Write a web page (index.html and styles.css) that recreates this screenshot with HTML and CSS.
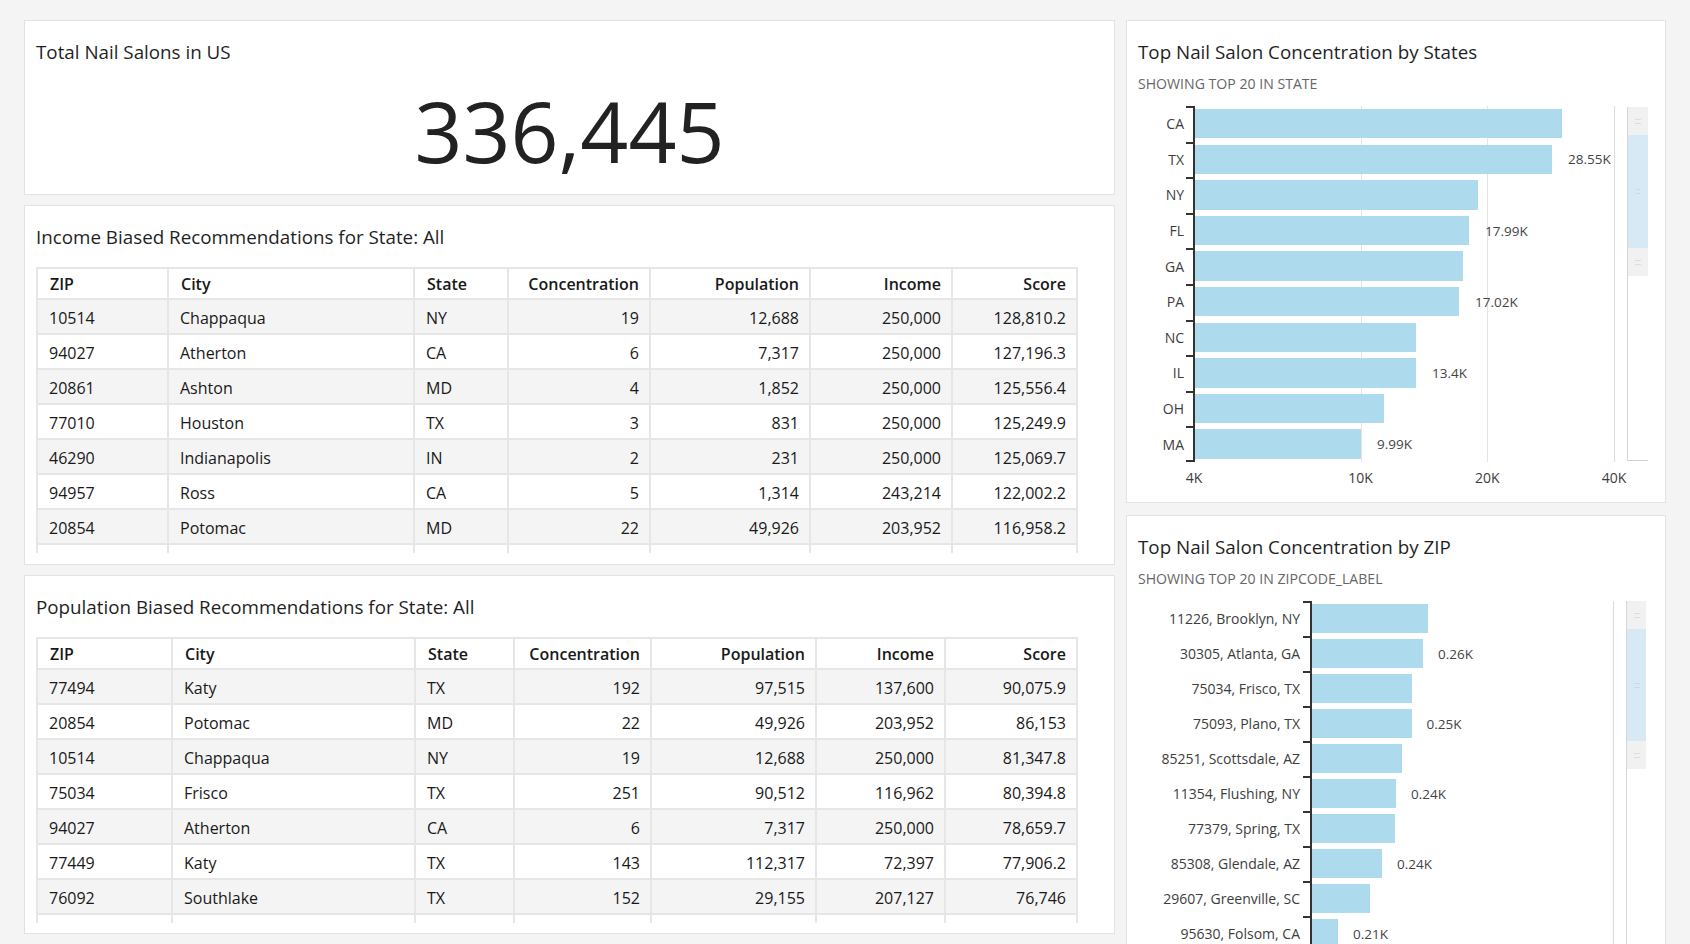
FILE: index.html
```html
<!DOCTYPE html>
<html lang="en">
<head>
<meta charset="utf-8">
<title>Nail Salons Dashboard</title>
<link rel="stylesheet" href="styles.css">
</head>
<body>
<div class="dashboard">
  <div class="col left">
    <section class="card kpi">
      <h2 class="title">Total Nail Salons in US</h2>
      <div class="kpi-value">336,445</div>
    </section>

    <section class="card tablecard">
      <h2 class="title">Income Biased Recommendations for State: All</h2>
      <div class="table-clip">
        <table class="dtable t1">
          <thead>
            <tr><th class="w1">ZIP</th><th class="w2">City</th><th class="w3">State</th><th class="w4 num">Concentration</th><th class="w5 num">Population</th><th class="w6 num">Income</th><th class="w7 num">Score</th></tr>
          </thead>
          <tbody>
            <tr><td>10514</td><td>Chappaqua</td><td>NY</td><td class="num">19</td><td class="num">12,688</td><td class="num">250,000</td><td class="num">128,810.2</td></tr>
            <tr><td>94027</td><td>Atherton</td><td>CA</td><td class="num">6</td><td class="num">7,317</td><td class="num">250,000</td><td class="num">127,196.3</td></tr>
            <tr><td>20861</td><td>Ashton</td><td>MD</td><td class="num">4</td><td class="num">1,852</td><td class="num">250,000</td><td class="num">125,556.4</td></tr>
            <tr><td>77010</td><td>Houston</td><td>TX</td><td class="num">3</td><td class="num">831</td><td class="num">250,000</td><td class="num">125,249.9</td></tr>
            <tr><td>46290</td><td>Indianapolis</td><td>IN</td><td class="num">2</td><td class="num">231</td><td class="num">250,000</td><td class="num">125,069.7</td></tr>
            <tr><td>94957</td><td>Ross</td><td>CA</td><td class="num">5</td><td class="num">1,314</td><td class="num">243,214</td><td class="num">122,002.2</td></tr>
            <tr><td>20854</td><td>Potomac</td><td>MD</td><td class="num">22</td><td class="num">49,926</td><td class="num">203,952</td><td class="num">116,958.2</td></tr>
            <tr><td></td><td></td><td></td><td></td><td></td><td></td><td></td></tr>
          </tbody>
        </table>
      </div>
    </section>

    <section class="card tablecard">
      <h2 class="title">Population Biased Recommendations for State: All</h2>
      <div class="table-clip">
        <table class="dtable t2">
          <thead>
            <tr><th class="w1">ZIP</th><th class="w2">City</th><th class="w3">State</th><th class="w4 num">Concentration</th><th class="w5 num">Population</th><th class="w6 num">Income</th><th class="w7 num">Score</th></tr>
          </thead>
          <tbody>
            <tr><td>77494</td><td>Katy</td><td>TX</td><td class="num">192</td><td class="num">97,515</td><td class="num">137,600</td><td class="num">90,075.9</td></tr>
            <tr><td>20854</td><td>Potomac</td><td>MD</td><td class="num">22</td><td class="num">49,926</td><td class="num">203,952</td><td class="num">86,153</td></tr>
            <tr><td>10514</td><td>Chappaqua</td><td>NY</td><td class="num">19</td><td class="num">12,688</td><td class="num">250,000</td><td class="num">81,347.8</td></tr>
            <tr><td>75034</td><td>Frisco</td><td>TX</td><td class="num">251</td><td class="num">90,512</td><td class="num">116,962</td><td class="num">80,394.8</td></tr>
            <tr><td>94027</td><td>Atherton</td><td>CA</td><td class="num">6</td><td class="num">7,317</td><td class="num">250,000</td><td class="num">78,659.7</td></tr>
            <tr><td>77449</td><td>Katy</td><td>TX</td><td class="num">143</td><td class="num">112,317</td><td class="num">72,397</td><td class="num">77,906.2</td></tr>
            <tr><td>76092</td><td>Southlake</td><td>TX</td><td class="num">152</td><td class="num">29,155</td><td class="num">207,127</td><td class="num">76,746</td></tr>
            <tr><td></td><td></td><td></td><td></td><td></td><td></td><td></td></tr>
          </tbody>
        </table>
      </div>
    </section>
  </div>

  <div class="col right">
    <section class="card chartcard states">
      <h2 class="title">Top Nail Salon Concentration by States</h2>
      <div class="subtitle">SHOWING TOP 20 IN STATE</div>
      <div class="chart">
        <div class="chart-main">
          <div class="chart-body">
            <div class="ylabels">
              <div class="yl">CA</div>
              <div class="yl">TX</div>
              <div class="yl">NY</div>
              <div class="yl">FL</div>
              <div class="yl">GA</div>
              <div class="yl">PA</div>
              <div class="yl">NC</div>
              <div class="yl">IL</div>
              <div class="yl">OH</div>
              <div class="yl">MA</div>
            </div>
            <div class="plot">
              <div class="band"><div class="bar" style="width:367px"></div></div>
              <div class="band"><div class="bar" style="width:357px"></div><span class="val">28.55K</span></div>
              <div class="band"><div class="bar" style="width:283px"></div></div>
              <div class="band"><div class="bar" style="width:274px"></div><span class="val">17.99K</span></div>
              <div class="band"><div class="bar" style="width:268px"></div></div>
              <div class="band"><div class="bar" style="width:264px"></div><span class="val">17.02K</span></div>
              <div class="band"><div class="bar" style="width:221px"></div></div>
              <div class="band"><div class="bar" style="width:221px"></div><span class="val">13.4K</span></div>
              <div class="band"><div class="bar" style="width:189px"></div></div>
              <div class="band"><div class="bar" style="width:166px"></div><span class="val">9.99K</span></div>
            </div>
          </div>
          <div class="xaxis">
            <span class="xl">4K</span><span class="xl">10K</span><span class="xl">20K</span><span class="xl">40K</span>
          </div>
        </div>
        <div class="scroller">
          <div class="handle"></div>
          <div class="thumb"></div>
          <div class="handle"></div>
          <div class="rest"></div>
        </div>
      </div>
    </section>

    <section class="card chartcard zips">
      <h2 class="title">Top Nail Salon Concentration by ZIP</h2>
      <div class="subtitle">SHOWING TOP 20 IN ZIPCODE_LABEL</div>
      <div class="chart">
        <div class="chart-main">
          <div class="chart-body">
            <div class="ylabels">
              <div class="yl">11226, Brooklyn, NY</div>
              <div class="yl">30305, Atlanta, GA</div>
              <div class="yl">75034, Frisco, TX</div>
              <div class="yl">75093, Plano, TX</div>
              <div class="yl">85251, Scottsdale, AZ</div>
              <div class="yl">11354, Flushing, NY</div>
              <div class="yl">77379, Spring, TX</div>
              <div class="yl">85308, Glendale, AZ</div>
              <div class="yl">29607, Greenville, SC</div>
              <div class="yl">95630, Folsom, CA</div>
            </div>
            <div class="plot">
              <div class="band"><div class="bar" style="width:116px"></div></div>
              <div class="band"><div class="bar" style="width:111px"></div><span class="val">0.26K</span></div>
              <div class="band"><div class="bar" style="width:99.5px"></div></div>
              <div class="band"><div class="bar" style="width:99.5px"></div><span class="val">0.25K</span></div>
              <div class="band"><div class="bar" style="width:90px"></div></div>
              <div class="band"><div class="bar" style="width:84px"></div><span class="val">0.24K</span></div>
              <div class="band"><div class="bar" style="width:82.5px"></div></div>
              <div class="band"><div class="bar" style="width:70px"></div><span class="val">0.24K</span></div>
              <div class="band"><div class="bar" style="width:58px"></div></div>
              <div class="band"><div class="bar" style="width:26px"></div><span class="val">0.21K</span></div>
            </div>
          </div>
        </div>
        <div class="scroller">
          <div class="handle"></div>
          <div class="thumb"></div>
          <div class="handle"></div>
          <div class="rest"></div>
        </div>
      </div>
    </section>
  </div>
</div>
</body>
</html>
```

FILE: styles.css
```css
* {
  box-sizing: border-box;
  margin: 0;
  padding: 0;
}

html, body {
  height: 100%;
}

body {
  background: #f4f4f4;
  font-family: "Open Sans", "Noto Sans", sans-serif;
  color: #222;
  overflow: hidden;
}

.dashboard {
  display: grid;
  grid-template-columns: 1091px 540px;
  column-gap: 11px;
  padding: 20px 24px 0;
  align-items: start;
}

.col {
  display: flex;
  flex-direction: column;
  gap: 10px;
}

.col.right {
  gap: 12px;
}

.card {
  background: #fff;
  border: 1px solid #e3e3e3;
  padding: 19px 11px 0;
  overflow: hidden;
}

.title {
  font-size: 18.8px;
  font-weight: 400;
  line-height: 24px;
  color: #1f1f1f;
  white-space: nowrap;
}

/* KPI */
.kpi {
  height: 175px;
}

.kpi-value {
  font-size: 84px;
  line-height: 84px;
  text-align: center;
  margin-top: 25px;
  color: #222;
}

/* Tables */
.tablecard {
  height: 360px;
}

.tablecard + .tablecard {
  height: 359px;
}

.table-clip {
  margin-top: 18px;
  height: 286px;
  width: 1042px;
  overflow: hidden;
}

.dtable {
  border-collapse: separate;
  border-spacing: 0;
  table-layout: fixed;
  width: 1042px;
  border-left: 2px solid #e6e6e6;
  border-top: 2px solid #e6e6e6;
  font-size: 16px;
  color: #191919;
}

.dtable th,
.dtable td {
  border-right: 2px solid #e6e6e6;
  border-bottom: 2px solid #e6e6e6;
  padding: 0 10px 0 11px;
  white-space: nowrap;
  text-align: left;
  overflow: hidden;
  line-height: 20px;
  vertical-align: middle;
}

.dtable th {
  height: 31px;
  font-weight: 600;
  padding-left: 12px;
}

.dtable td {
  height: 35px;
  padding-top: 2px;
}

.dtable .num {
  text-align: right;
}

.dtable tbody tr:nth-child(odd) {
  background: #f4f4f4;
}

.t1 .w1 { width: 131px; }
.t1 .w2 { width: 246px; }
.t1 .w3 { width: 94px; }
.t1 .w4 { width: 142px; }
.t1 .w5 { width: 160px; }
.t1 .w6 { width: 142px; }
.t1 .w7 { width: 125px; }

.t2 .w1 { width: 135px; }
.t2 .w2 { width: 243px; }
.t2 .w3 { width: 99px; }
.t2 .w4 { width: 137px; }
.t2 .w5 { width: 165px; }
.t2 .w6 { width: 129px; }
.t2 .w7 { width: 132px; }

/* Charts */
.chartcard.states {
  height: 483px;
}

.chartcard.zips {
  height: 440px;
}

.subtitle {
  font-size: 14.1px;
  line-height: 20px;
  color: #666;
  margin-top: 10px;
}

.chart {
  display: flex;
  margin-top: 12px;
}

.chart-main {
  display: flex;
  flex-direction: column;
}

.chart-body {
  display: flex;
}

.ylabels {
  display: flex;
  flex-direction: column;
}

.yl {
  display: flex;
  align-items: center;
  justify-content: flex-end;
  padding-right: 9px;
  font-size: 14px;
  color: #3d3d3d;
  white-space: nowrap;
  background: linear-gradient(#333, #333) right top / 7px 2px no-repeat;
}

.yl:last-child {
  background:
    linear-gradient(#333, #333) right top / 7px 2px no-repeat,
    linear-gradient(#333, #333) right bottom / 7px 2px no-repeat;
}

.plot {
  border-left: 2px solid #333;
  display: flex;
  flex-direction: column;
}

.band {
  display: flex;
  align-items: center;
}

.bar {
  height: 29.4px;
  background: #addaec;
  flex: none;
}

.val {
  margin-left: 16px;
  font-size: 13.5px;
  color: #444;
  white-space: nowrap;
}

/* States chart geometry (log scale 4K..40K over 420px) */
.states .ylabels {
  width: 55px;
}

.states .yl,
.states .band {
  height: 35.6px;
}

.states .plot {
  width: 422px;
  background:
    linear-gradient(#e4e4e4, #e4e4e4) 165.6px 0 / 1px 100% no-repeat,
    linear-gradient(#e4e4e4, #e4e4e4) 292.3px 0 / 1px 100% no-repeat,
    linear-gradient(#dcdcdc, #dcdcdc) 419px 0 / 1px 100% no-repeat;
}

.xaxis {
  display: grid;
  grid-template-columns: 166.6px 126.7px 126.7px 0;
  padding-left: 56px;
  margin-top: 6px;
  height: 20px;
}

.xl {
  font-size: 14px;
  line-height: 20px;
  color: #3d3d3d;
  white-space: nowrap;
  justify-self: start;
  transform: translateX(-50%);
}

/* ZIP chart geometry */
.zips .ylabels {
  width: 172px;
}

.zips .yl {
  padding-right: 10px;
}

.zips .yl,
.zips .band {
  height: 35px;
}

.zips .plot {
  width: 304px;
  background: linear-gradient(#dcdcdc, #dcdcdc) 301px 0 / 1px 100% no-repeat;
}

.zips .bar {
  height: 29px;
}

.zips .val {
  margin-left: 15px;
}

/* Range scroller */
.scroller {
  width: 21px;
  height: 354px;
  margin-top: 1px;
  margin-left: 12px;
  display: flex;
  flex-direction: column;
  border-left: 1px solid #d6d6d6;
  border-bottom: 1px solid #cfcfcf;
  background: #fff;
}

.zips .scroller {
  margin-top: 0;
  height: 380px;
  width: 20px;
}

.handle {
  height: 28px;
  flex: none;
  background:
    linear-gradient(#dedede, #dedede) center calc(50% - 2px) / 6px 1px no-repeat,
    linear-gradient(#dedede, #dedede) center calc(50% + 2px) / 6px 1px no-repeat,
    #f1f1f1;
}

.thumb {
  height: 113px;
  flex: none;
  background:
    linear-gradient(#c6dceb, #c6dceb) center calc(50% - 2px) / 6px 1px no-repeat,
    linear-gradient(#c6dceb, #c6dceb) center calc(50% + 2px) / 6px 1px no-repeat,
    #d6e9f5;
}

.zips .thumb {
  height: 112px;
}

.rest {
  flex: 1;
}
```
